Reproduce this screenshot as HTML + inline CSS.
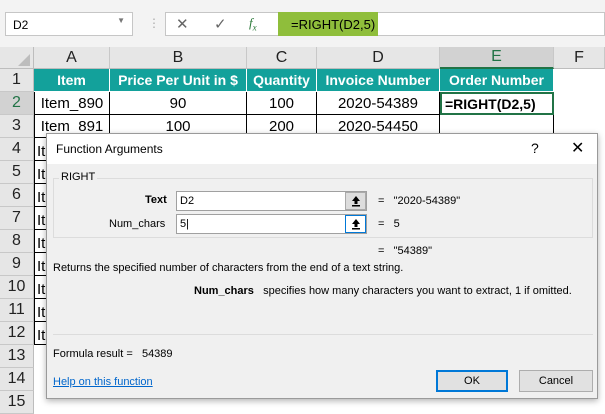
<!DOCTYPE html><html><head><style>
*{box-sizing:border-box;margin:0;padding:0}
body{width:605px;height:407px;overflow:hidden;background:#fff;font-family:"Liberation Sans",sans-serif;position:relative}
.a{position:absolute}
.cell{position:absolute;border-right:1px solid #000;border-bottom:1px solid #000;font-size:15px;display:flex;align-items:center;justify-content:center;white-space:nowrap;overflow:hidden}
.h{background:#13a19b;color:#fff;font-weight:bold;border-color:#fff;font-size:14px}
.rh{position:absolute;left:0;width:34px;height:23px;background:#e6e6e6;border-bottom:1px solid #c8c8c8;border-right:1px solid #bdbdbd;font-size:16px;display:flex;align-items:center;justify-content:center;color:#222}
.ch{position:absolute;top:47px;height:22px;background:#e6e6e6;border-right:1px solid #c8c8c8;border-bottom:1px solid #bdbdbd;font-size:16px;display:flex;align-items:center;justify-content:center;color:#222}
.dl{font-size:11px;color:#000;position:absolute;white-space:nowrap}
.ub{position:absolute;width:21px;height:18px;display:flex;align-items:center;justify-content:center}
</style></head><body>
<div class="a" style="left:0;top:0;width:605px;height:47px;background:#f3f3f3"></div>
<div class="a" style="left:5px;top:12px;width:128px;height:24px;background:#fff;border:1px solid #c6c6c6;font-size:12px;padding:5px 0 0 7px">D2<span style="position:absolute;right:7px;top:3px;font-size:8px;color:#777">▼</span></div>
<div class="a" style="left:148px;top:16px;color:#aaa;font-size:12px">⋮</div>
<div class="a" style="left:165px;top:12px;width:113px;height:24px;background:#fff;border:1px solid #c6c6c6;border-right:none"></div>
<div class="a" style="left:176px;top:15px;color:#666;font-size:15px">✕</div>
<div class="a" style="left:214px;top:15px;color:#666;font-size:15px">✓</div>
<div class="a" style="left:249px;top:15px;color:#2c7a3a;font-size:13px;font-style:italic;font-family:'Liberation Serif',serif">f<sub style="font-size:9px">x</sub></div>
<div class="a" style="left:278px;top:12px;width:100px;height:24px;background:#8fbe3b;font-size:13px;padding:5px 0 0 13px">=RIGHT(D2,5)</div>
<div class="a" style="left:378px;top:12px;width:227px;height:24px;background:#fff;border:1px solid #c6c6c6;border-left:none"></div>
<div class="a" style="left:0;top:47px;width:34px;height:22px;background:#e6e6e6;border-right:1px solid #bdbdbd;border-bottom:1px solid #bdbdbd"></div>
<div class="a" style="left:18px;top:54px;width:0;height:0;border-left:12px solid transparent;border-bottom:12px solid #bdbdbd"></div>
<div class="ch" style="left:34px;width:76px">A</div>
<div class="ch" style="left:110px;width:137px">B</div>
<div class="ch" style="left:247px;width:70px">C</div>
<div class="ch" style="left:317px;width:123px">D</div>
<div class="ch" style="left:440px;width:114px;background:#d2d2d2;border-bottom:2px solid #217346;color:#217346">E</div>
<div class="ch" style="left:554px;width:51px">F</div>
<div class="rh" style="top:69px">1</div>
<div class="rh" style="top:92px;background:#d2d2d2;color:#217346">2</div>
<div class="rh" style="top:115px">3</div>
<div class="rh" style="top:138px">4</div><div class="rh" style="top:161px">5</div><div class="rh" style="top:184px">6</div><div class="rh" style="top:207px">7</div><div class="rh" style="top:230px">8</div><div class="rh" style="top:253px">9</div><div class="rh" style="top:276px">10</div><div class="rh" style="top:299px">11</div><div class="rh" style="top:322px">12</div><div class="rh" style="top:345px">13</div><div class="rh" style="top:368px">14</div><div class="rh" style="top:391px">15</div>
<div class="cell h" style="left:34px;top:69px;width:76px;height:23px">Item</div>
<div class="cell h" style="left:110px;top:69px;width:137px;height:23px">Price Per Unit in $</div>
<div class="cell h" style="left:247px;top:69px;width:70px;height:23px">Quantity</div>
<div class="cell h" style="left:317px;top:69px;width:123px;height:23px">Invoice Number</div>
<div class="cell h" style="left:440px;top:69px;width:114px;height:23px">Order Number</div>
<div class="cell" style="left:34px;top:92px;width:76px;height:23px;border-left:1px solid #000">Item_890</div>
<div class="cell" style="left:110px;top:92px;width:137px;height:23px">90</div>
<div class="cell" style="left:247px;top:92px;width:70px;height:23px">100</div>
<div class="cell" style="left:317px;top:92px;width:123px;height:23px">2020-54389</div>
<div class="cell" style="left:440px;top:92px;width:114px;height:23px;font-weight:bold;font-size:14px;justify-content:flex-start;padding-left:3px;border:2px solid #217346">=RIGHT(D2,5)</div>
<div class="cell" style="left:34px;top:115px;width:76px;height:23px;border-left:1px solid #000">Item_891</div>
<div class="cell" style="left:110px;top:115px;width:137px;height:23px">100</div>
<div class="cell" style="left:247px;top:115px;width:70px;height:23px">200</div>
<div class="cell" style="left:317px;top:115px;width:123px;height:23px">2020-54450</div>
<div class="cell" style="left:440px;top:115px;width:114px;height:23px"></div>
<div class="a" style="left:34px;top:138px;width:1px;height:207px;background:#000"></div>
<div class="a" style="left:37px;top:140px;font-size:15px;line-height:23px">It<br>It<br>It<br>It<br>It<br>It<br>It<br>It<br>It</div>
<div class="a" style="left:34px;top:160px;width:12px;height:1px;background:#000;box-shadow:0 23px #000,0 46px #000,0 69px #000,0 92px #000,0 115px #000,0 138px #000,0 161px #000,0 184px #000"></div>
<div class="a" style="left:46px;top:133px;width:552px;height:266px;background:#f0f0f0;border:1px solid #9a9a9a;box-shadow:0 2px 6px rgba(0,0,0,.3)">
<div class="a" style="left:0;top:0;width:550px;height:30px;background:#fff"></div>
<div class="dl" style="left:9px;top:8px;font-size:12px">Function Arguments</div>
<div class="dl" style="left:484px;top:6px;font-size:14px">?</div>
<div class="dl" style="left:524px;top:4px;font-size:16px">✕</div>
<div class="a" style="left:6px;top:44px;width:540px;height:60px;border:1px solid #dcdcdc"></div>
<div class="dl" style="left:12px;top:37px;background:#f0f0f0;padding:0 2px">RIGHT</div>
<div class="dl" style="left:98px;top:60px;font-weight:bold">Text</div>
<div class="a" style="left:129px;top:57px;width:191px;height:20px;background:#fff;border:1px solid #a0a0a0"><span class="dl" style="left:3px;top:3px">D2</span></div>
<div class="ub" style="left:298px;top:58px;background:#ddd;border:1px solid #aaa"><svg width="10" height="12" viewBox="0 0 10 12"><path d="M5 1L1 6H3.5V9H6.5V6H9Z" fill="#000"/><rect x="1" y="10" width="8" height="1.5" fill="#000"/></svg></div>
<div class="dl" style="left:62px;top:84px">Num_chars</div>
<div class="a" style="left:129px;top:80px;width:191px;height:20px;background:#fff;border:1px solid #a0a0a0"><span class="dl" style="left:3px;top:3px">5|</span></div>
<div class="ub" style="left:298px;top:81px;background:#fff;border:1px solid #0078d7"><svg width="10" height="12" viewBox="0 0 10 12"><path d="M5 1L1 6H3.5V9H6.5V6H9Z" fill="#000"/><rect x="1" y="10" width="8" height="1.5" fill="#000"/></svg></div>
<div class="dl" style="left:331px;top:61px">=&nbsp;&nbsp;&nbsp;"2020-54389"</div>
<div class="dl" style="left:331px;top:84px">=&nbsp;&nbsp;&nbsp;5</div>
<div class="dl" style="left:331px;top:111px">=&nbsp;&nbsp;&nbsp;"54389"</div>
<div class="dl" style="left:6px;top:128px">Returns the specified number of characters from the end of a text string.</div>
<div class="dl" style="left:147px;top:151px"><b>Num_chars</b>&nbsp;&nbsp;&nbsp;specifies how many characters you want to extract, 1 if omitted.</div>
<div class="a" style="left:6px;top:200px;width:540px;height:1px;background:#dcdcdc"></div>
<div class="dl" style="left:6px;top:214px">Formula result =&nbsp;&nbsp;&nbsp;54389</div>
<div class="dl" style="left:6px;top:242px;color:#0066cc;text-decoration:underline">Help on this function</div>
<div class="a" style="left:389px;top:236px;width:72px;height:22px;background:#e1e1e1;border:2px solid #0078d7;font-size:11px;text-align:center;line-height:18px">OK</div>
<div class="a" style="left:472px;top:236px;width:74px;height:22px;background:#e1e1e1;border:1px solid #adadad;font-size:11px;text-align:center;line-height:20px">Cancel</div>
</div>
</body></html>
